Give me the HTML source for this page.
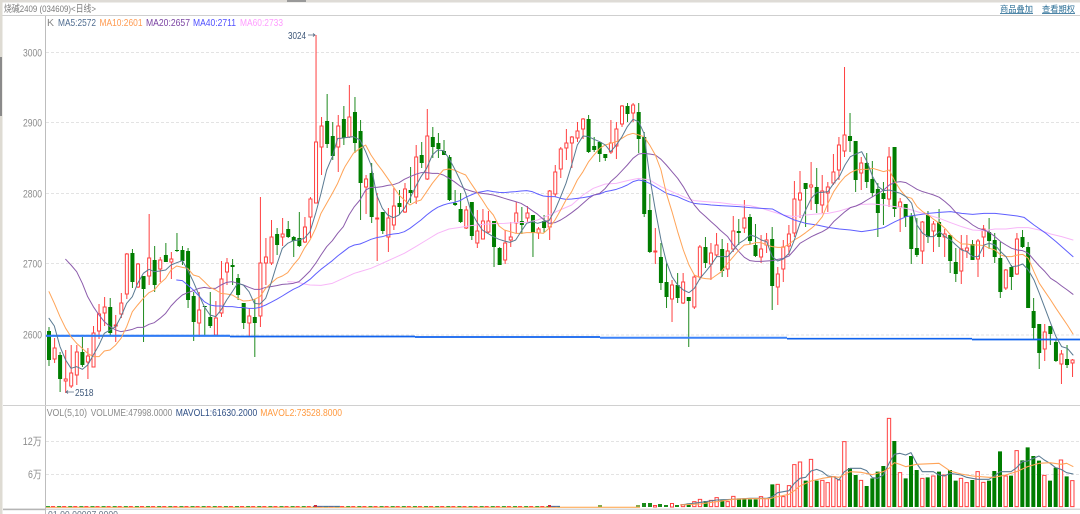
<!DOCTYPE html>
<html>
<head>
<meta charset="utf-8">
<title>烧碱2409</title>
<style>
html,body{margin:0;padding:0;background:#fff;width:1080px;height:514px;overflow:hidden}
svg{display:block;filter:blur(.3px)}
text{font-family:"Liberation Sans","Noto Sans CJK SC",sans-serif}
</style>
</head>
<body>
<svg width="1080" height="514" viewBox="0 0 1080 514" xmlns="http://www.w3.org/2000/svg">
<rect width="1080" height="514" fill="#fff"/>
<!-- chrome -->
<rect x="0" y="0" width="1080" height="2.5" fill="#dedbd6"/>
<rect x="287" y="0" width="19" height="2" fill="#999"/>
<rect x="0" y="15" width="1080" height="1" fill="#cfcfcf"/>
<rect x="0" y="0" width="2.5" height="514" fill="#dedbd3"/>
<rect x="0" y="57" width="2" height="59" fill="#8a8a8a"/>
<rect x="45" y="16" width="1" height="498" fill="#bdbdbd"/>
<rect x="3" y="405" width="1077" height="1" fill="#d0d0d0"/>
<rect x="46" y="508.6" width="1034" height="1.2" fill="#cfcfcf"/>
<rect x="3" y="508.6" width="42" height="1.6" fill="#b5b5b5"/>
<!-- grid -->
<g stroke="#e3e3e3" stroke-width="1" stroke-dasharray="3 2">
<path d="M46 52.5H1080M46 122.5H1080M46 193.5H1080M46 263.5H1080M46 335H1080M46 441.5H1080M46 474.5H1080"/>
</g>
<!-- title & links -->
<text x="4" y="12" font-size="9.5" fill="#7a7a7a" textLength="92" lengthAdjust="spacingAndGlyphs">烧碱2409 (034609)&lt;日线&gt;</text>
<text x="1000" y="12" font-size="8.3" fill="#2a6e96" text-decoration="underline" textLength="33" lengthAdjust="spacingAndGlyphs">商品叠加</text>
<text x="1042" y="12" font-size="8.3" fill="#2a6e96" text-decoration="underline" textLength="33" lengthAdjust="spacingAndGlyphs">查看期权</text>
<!-- axis labels -->
<g font-size="11" fill="#8c8c8c">
<text x="23" y="56.5" textLength="19" lengthAdjust="spacingAndGlyphs">3000</text>
<text x="23" y="126.5" textLength="19" lengthAdjust="spacingAndGlyphs">2900</text>
<text x="23" y="197.5" textLength="19" lengthAdjust="spacingAndGlyphs">2800</text>
<text x="23" y="267.5" textLength="19" lengthAdjust="spacingAndGlyphs">2700</text>
<text x="23" y="338.5" textLength="19" lengthAdjust="spacingAndGlyphs">2600</text>
<text x="22.7" y="445" textLength="19" lengthAdjust="spacingAndGlyphs">12万</text>
<text x="28" y="478" textLength="13.7" lengthAdjust="spacingAndGlyphs">6万</text>
</g>
<!-- legend -->
<g font-size="10.5">
<text x="47" y="26" fill="#888">K</text>
<text x="58" y="26" fill="#4f6c90" textLength="38" lengthAdjust="spacingAndGlyphs">MA5:2572</text>
<text x="99.5" y="26" fill="#ff9a50" textLength="43" lengthAdjust="spacingAndGlyphs">MA10:2601</text>
<text x="146" y="26" fill="#7a42a2" textLength="44" lengthAdjust="spacingAndGlyphs">MA20:2657</text>
<text x="193" y="26" fill="#5050ff" textLength="43" lengthAdjust="spacingAndGlyphs">MA40:2711</text>
<text x="240" y="26" fill="#ff9cff" textLength="43" lengthAdjust="spacingAndGlyphs">MA60:2733</text>
<text x="46.7" y="416" fill="#8a8a8a" textLength="40.3" lengthAdjust="spacingAndGlyphs">VOL(5,10)</text>
<text x="90.7" y="416" fill="#8a8a8a" textLength="81.6" lengthAdjust="spacingAndGlyphs">VOLUME:47998.0000</text>
<text x="175.7" y="416" fill="#2f4f85" textLength="81.6" lengthAdjust="spacingAndGlyphs">MAVOL1:61630.2000</text>
<text x="260.3" y="416" fill="#ff9a40" textLength="81.7" lengthAdjust="spacingAndGlyphs">MAVOL2:73528.8000</text>
<text x="48" y="518" fill="#667788" textLength="70" lengthAdjust="spacingAndGlyphs">01.00.00007.0000</text>
</g>
<!-- candles -->
<g transform="matrix(1.00054 0 0 1 -.03 0)">
<path fill="none" stroke="#ff4040" stroke-width="1" d="M54.6 338V363M65.7 350V393M71.2 345V388M76.8 345V385M87.9 348V379M93.5 326V367M99 304V339M104.6 297V326M115.7 315V342M121.3 293V318M126.8 253V299M138 263V288M149.1 214V285M160.2 257V282M171.3 252V279M199.1 292V337M215.8 301V336M221.4 261V317M226.9 258V285M249.2 308V336M260.3 197V327M265.8 238V285M271.4 220V265M282.5 218V246M304.8 217V243M310.3 197V238M315.9 35V203M321.4 117V175M338.1 115V172M349.2 85V138M365.9 175V214M377 193V261M388.2 208V252M393.7 188V230M404.8 183V213M416 145V204M427.1 109V180M466 206V229M477.1 210V248M482.7 209V239M488.2 211V233M504.9 230V264M510.5 222V247M516 202V233M527.2 206V222M538.3 227V239M549.4 190V240M555 165V197M560.5 147V178M566.1 129V160M571.6 136V168M577.2 122V142M582.8 118V139M610.6 120V154M616.1 122V159M621.7 105V127M632.8 103V122M655 228V264M671.7 280V322M682.8 273V304M694 275V309M699.5 245V280M710.6 243V280M716.2 233V257M727.3 243V277M732.9 216V252M744 200V233M760.7 235V263M766.2 233V253M777.4 267V305M782.9 240V282M788.5 225V255M794 181V237M799.6 171V218M810.7 162V210M821.8 175V213M827.4 182V212M833 154V185M838.5 137V180M844.1 67V157M860.8 157V190M888.6 147V207M899.7 198V232M921.9 221V264M933 221V252M944.2 229V257M960.8 235V284M966.4 235V258M977.5 239V277M983.1 225V257M1005.3 269V290M1016.4 233V275M1044.2 324V361M1060.9 350V384M1072 359V377"/>
<path fill="none" stroke="#1e8a1e" stroke-width="1" d="M49 327V366M60.1 352V392M82.4 337V367M110.2 298V335M132.4 249V288M143.5 276V342M154.6 246V292M165.8 243V262M176.9 233V252M182.4 246V265M188 248V308M193.6 292V341M204.7 306V335M210.2 292V328M232.5 259V285M238 274V300M243.6 303V329M254.7 299V357M277 228V255M288.1 221V238M293.6 236V257M299.2 212V247M327 94V148M332.6 122V160M343.7 106V145M354.8 97V153M360.4 120V220M371.5 163V223M382.6 212V234M399.3 190V215M410.4 167V203M421.5 142V168M432.6 127V158M438.2 133V158M443.8 140V155M449.3 155V201M454.9 190V206M460.4 193V223M471.6 202V240M493.8 221V267M499.4 247V265M521.6 207V234M532.7 215V257M543.8 215V233M588.3 115V153M593.9 137V152M599.4 142V162M605 154V161M627.2 103V122M638.4 103V153M643.9 132V217M649.5 194V253M660.6 243V290M666.2 263V308M677.3 273V303M688.4 297V347M705.1 237V268M721.8 239V277M738.4 219V245M749.6 214V244M755.1 224V257M771.8 227V310M805.2 183V227M816.3 168V213M849.6 113V152M855.2 141V192M866.3 153V188M871.9 161V197M877.4 183V237M883 182V225M894.1 147V217M905.2 204V227M910.8 213V264M916.4 218V257M927.5 211V243M938.6 209V247M949.7 234V273M955.3 248V282M972 240V260M988.6 218V249M994.2 233V263M999.8 242V298M1010.9 265V290M1022 230V248M1027.6 242V308M1033.1 298V339M1038.7 325V369M1049.8 326V345M1055.4 340V362M1066.5 345V368"/>
<path fill="#fff" stroke="#ff4040" stroke-width="1" d="M53.1 348h3V359h-3zM64.2 379h3V381h-3zM69.7 373h3V386h-3zM75.3 352h3V375h-3zM86.4 356h3V362h-3zM92 333h3V367h-3zM97.5 314h3V331h-3zM103.1 307h3V313h-3zM114.2 325h3V326h-3zM119.8 303h3V314h-3zM125.3 254h3V294h-3zM136.5 264h3V287h-3zM147.6 258h3V276h-3zM158.7 260h3V269h-3zM169.8 259h3V262h-3zM197.6 310h3V323h-3zM214.3 318h3V335h-3zM219.9 279h3V313h-3zM225.4 263h3V272h-3zM247.7 316h3V323h-3zM258.8 263h3V316h-3zM264.3 257h3V263h-3zM269.9 237h3V263h-3zM281 234h3V237h-3zM303.3 227h3V242h-3zM308.8 199h3V217h-3zM314.4 142h3V203h-3zM319.9 126h3V147h-3zM336.6 126h3V147h-3zM347.7 117h3V137h-3zM364.4 179h3V187h-3zM375.5 218h3V219h-3zM386.7 218h3V237h-3zM392.2 206h3V225h-3zM403.3 189h3V212h-3zM414.5 157h3V197h-3zM425.6 136h3V179h-3zM464.5 210h3V228h-3zM475.6 231h3V243h-3zM481.2 221h3V239h-3zM486.7 221h3V232h-3zM503.4 243h3V260h-3zM509 237h3V240h-3zM514.5 213h3V223h-3zM525.7 213h3V218h-3zM536.8 229h3V233h-3zM547.9 191h3V227h-3zM553.5 172h3V194h-3zM559 149h3V169h-3zM564.6 143h3V148h-3zM570.1 137h3V143h-3zM575.7 131h3V138h-3zM581.3 119h3V129h-3zM609.1 143h3V152h-3zM614.6 129h3V146h-3zM620.2 106h3V124h-3zM631.3 105h3V113h-3zM653.5 251h3V252h-3zM670.2 285h3V299h-3zM681.3 282h3V303h-3zM692.5 277h3V307h-3zM698 247h3V277h-3zM709.1 253h3V264h-3zM714.7 245h3V255h-3zM725.8 251h3V269h-3zM731.4 231h3V249h-3zM742.5 218h3V228h-3zM759.2 249h3V257h-3zM764.7 240h3V245h-3zM775.9 274h3V287h-3zM781.4 247h3V269h-3zM787 234h3V246h-3zM792.5 199h3V233h-3zM798.1 193h3V200h-3zM809.2 185h3V187h-3zM820.3 191h3V205h-3zM825.9 187h3V193h-3zM831.5 172h3V183h-3zM837 145h3V170h-3zM842.6 135h3V151h-3zM859.3 163h3V173h-3zM887.1 157h3V199h-3zM898.2 202h3V207h-3zM920.4 222h3V251h-3zM931.5 224h3V231h-3zM942.7 234h3V237h-3zM959.3 249h3V271h-3zM964.9 248h3V251h-3zM976 241h3V259h-3zM981.6 229h3V237h-3zM1003.8 270h3V288h-3zM1014.9 239h3V274h-3zM1042.7 332h3V349h-3zM1059.4 354h3V364h-3zM1070.5 360h3V363h-3z"/>
<path fill="none" stroke="#007d00" stroke-width="4" d="M49 331V360M60.1 355V379M82.4 352V365M110.2 307V333M132.4 253V282M143.5 276V289M154.6 260V285M165.8 255V262M176.9 250V251M182.4 250V261M188 251V300M193.6 296V322M204.7 306V307M210.2 317V326M232.5 265V267M238 278V295M243.6 303V323M254.7 317V323M277 234V245M288.1 229V237M293.6 237V241M299.2 238V246M327 121V144M332.6 136V156M343.7 119V138M354.8 112V143M360.4 131V183M371.5 173V217M382.6 212V231M399.3 203V207M410.4 190V193M421.5 155V163M432.6 137V147M438.2 143V149M443.8 151V155M449.3 157V200M454.9 203V205M460.4 209V222M471.6 202V236M493.8 221V247M499.4 248V265M521.6 221V225M532.7 215V233M543.8 221V228M588.3 119V152M593.9 146V150M599.4 142V154M605 154V158M627.2 106V114M638.4 112V139M643.9 137V214M649.5 210V252M660.6 257V283M666.2 282V297M677.3 285V298M688.4 297V301M705.1 247V263M721.8 249V271M738.4 231V233M749.6 217V241M755.1 245V256M771.8 239V286M805.2 183V189M816.3 187V204M849.6 136V141M855.2 141V180M866.3 163V182M871.9 179V193M877.4 189V213M883 193V199M894.1 147V209M905.2 204V217M910.8 216V249M916.4 248V255M927.5 215V237M938.6 222V237M949.7 235V261M955.3 262V274M972 244V260M988.6 232V241M994.2 240V257M999.8 258V292M1010.9 267V277M1022 237V247M1027.6 247V308M1033.1 311V328M1038.7 324V353M1049.8 326V334M1055.4 342V361M1066.5 359V365"/>
</g>
<!-- support line -->
<g fill="none" stroke-linecap="butt">
<path stroke="#2f7bf5" stroke-width="2.1" d="M46 335.8H230"/>
<path stroke="#0f62ee" stroke-width="1.7" d="M230 336.5H415M415 337H600"/>
<path stroke="#3c82f8" stroke-width="2" d="M600 337.7H787"/>
<path stroke="#0f62ee" stroke-width="1.7" d="M787 338.7H972M972 339.5H1080"/>
</g>
<!-- high/low markers -->
<text x="288" y="39" font-size="10.5" fill="#3c5678" textLength="18" lengthAdjust="spacingAndGlyphs">3024</text>
<path d="M308 35H315M313 33.5L315 35L313 36.5" fill="none" stroke="#5a6d85" stroke-width=".8"/>
<path d="M66 392H74M68 390.5L66 392L68 393.5" fill="none" stroke="#5a6d85" stroke-width=".8"/>
<text x="75" y="396" font-size="10.5" fill="#3c5678" textLength="18.5" lengthAdjust="spacingAndGlyphs">2518</text>
<!-- moving averages: MA60, MA40, MA20, MA10, MA5 -->
<g fill="none" stroke-width="3" stroke-linejoin="round" stroke-linecap="round">
<g transform="matrix(.33333 0 0 .33333 0 170)">
<polyline stroke="#f8b6f8" points="863,335 880,336 897,338 913,342 930,345 963,346 997,340 1030,325 1063,310 1080,305"/>
<polyline stroke="#5f5fff" points="530,330 547,332 563,345 580,360 597,378 613,395 630,405 647,408 663,408 680,410 697,410 713,412 730,413 747,415 763,415 780,412 797,405 813,397 830,388 847,378 863,368 880,358 897,350 913,340 930,328 947,312 963,298 980,285 997,272 1013,258 1030,245 1047,232 1063,225 1080,222"/>
<polyline stroke="#8c5cac" points="197,268 213,285 230,305 247,340 263,380 280,410 297,435 313,455 330,470 347,480 363,485 380,482 397,478 413,472 430,472 447,463 463,458 480,445 497,430 513,408 530,390 547,375 563,368 580,362 597,355 613,352 630,355 647,355 663,345 680,337 697,335 713,340 730,345 747,352 763,358 780,358 797,352 813,350 830,347 847,343 863,342 880,340 897,335 913,320 930,303 947,280 963,255 980,230 997,212 1013,190 1030,170 1047,135 1063,110 1080,90"/>
<polyline stroke="#ffa458" points="147,365 163,400 180,440 197,475 213,500 230,520 247,535 263,550 280,560 297,560 313,543 330,540 347,525 363,505 380,470 397,425 413,405 430,385 447,368 463,360 480,340 497,325 513,300 530,288 547,292 563,295 580,315 597,320 613,335 630,352 647,360 663,370 680,372 697,375 713,385 730,393 747,392 763,388 780,380 797,355 813,340 830,325 847,318 863,308 880,285 897,265 913,235 930,210 947,175 963,130 980,100 997,70 1013,40 1030,0"/>
<polyline stroke="#5a7a92" points="147,445 163,468 180,530 197,570 213,595 230,590 247,598 263,585 280,555 297,525 313,490 330,480 347,470 363,440 380,400 397,380 413,340 430,310 447,298 463,305 480,303 497,300 513,285 530,278 547,272 563,300 580,335 597,375 613,410 630,435 647,440 663,420 680,390 697,365 713,340 730,345 747,365 763,400 780,402 797,385 813,340 830,285 847,235 863,220 880,212 897,210 913,205 930,185 947,130 963,70 980,0"/>
</g>
<g transform="matrix(.33333 0 0 .33333 360 80)">
<polyline stroke="#f8b6f8" points="0,575 33,565 67,550 100,535 133,520 167,500 200,480 233,460 267,447 300,442 333,437 367,433 400,431 433,430 467,428 500,427 533,420 567,405 600,390 635,375 669,345 700,325 736,312 769,310 802,302 836,295 869,300 903,320 936,335 970,350 1003,362 1037,365 1080,368"/>
<polyline stroke="#5f5fff" points="0,492 17,485 33,478 50,473 67,470 83,465 100,462 117,460 133,455 150,445 167,432 183,420 200,405 217,392 233,382 250,375 267,370 283,367 300,362 317,352 333,345 350,338 367,335 383,332 400,335 417,337 433,338 450,336 467,335 483,333 500,332 517,335 533,342 550,348 567,350 585,350 602,355 618,358 635,357 652,355 669,353 686,350 702,345 719,342 736,335 752,332 769,328 786,322 802,315 819,305 836,300 852,303 869,310 886,320 903,330 919,340 936,345 953,350 970,358 987,365 1003,370 1020,372 1037,373 1053,375 1070,376 1080,377"/>
<polyline stroke="#8c5cac" points="0,360 17,330 33,322 50,322 67,320 83,316 100,314 117,308 133,298 150,290 167,283 183,278 200,278 217,280 233,280 250,285 267,295 283,305 300,318 317,328 333,333 350,338 367,340 383,342 400,345 417,350 433,355 450,360 467,365 483,370 500,380 517,392 533,403 550,418 567,430 585,428 602,420 618,410 635,398 652,385 669,370 686,355 702,345 719,340 736,325 752,305 769,290 786,272 802,255 819,235 836,222 852,220 869,222 886,225 903,238 919,255 936,275 953,295 970,320 987,350 1003,375 1020,395 1037,410 1053,425 1070,440 1080,450"/>
<polyline stroke="#ffa458" points="-50,270 -45,260 -20,220 0,205 17,195 33,225 50,250 67,272 83,295 100,320 117,345 133,360 150,375 167,365 183,360 200,335 217,310 233,290 250,270 267,267 283,270 300,278 317,285 333,310 350,335 367,360 383,385 400,405 417,438 433,450 450,455 467,460 483,460 500,458 517,458 533,458 550,460 567,445 585,420 602,390 618,360 635,335 652,300 669,275 686,245 702,225 719,205 736,195 752,190 769,185 786,175 802,165 819,160 836,165 852,170 869,195 886,225 903,270 919,340 936,395 953,455 970,510 987,555 1003,585 1020,593 1037,596 1053,597 1070,585 1080,578"/>
<polyline stroke="#5a7a92" points="-100,270 -83,230 -67,175 -60,175 -20,170 0,180 17,215 33,255 50,345 67,385 83,405 100,413 117,405 133,385 150,355 167,320 183,290 200,265 217,225 233,210 250,212 267,235 283,265 300,300 317,340 333,395 350,425 367,450 383,460 400,470 417,478 433,483 450,487 467,480 483,455 500,430 517,425 533,430 550,425 567,422 585,390 602,350 618,310 635,255 652,195 669,168 686,170 702,178 719,185 736,195 752,215 769,195 786,170 802,140 819,118 836,125 852,160 869,290 886,390 903,480 919,545 936,590 953,615 970,630 987,638 1003,625 1020,595 1037,575 1053,555 1070,530"/>
</g>
<g transform="matrix(.33333 0 0 .33333 720 60)">
<polyline stroke="#f8b6f8" points="0,428 40,433 90,437 124,445 157,455 190,465 223,470 257,465 291,462 324,460 358,453 391,443 425,433 458,432 491,435 525,440 558,445 591,455 625,465 658,475 692,488 725,500 758,510 792,512 825,507 858,507 892,503 925,503 958,510 992,522 1025,530 1059,540"/>
<polyline stroke="#5f5fff" points="0,437 23,438 57,440 90,443 124,445 157,447 190,465 223,480 257,490 291,495 324,502 358,507 391,510 425,515 458,510 491,503 525,485 558,470 591,465 625,460 658,457 692,455 725,460 758,463 792,460 825,460 858,464 892,468 912,472 942,495 975,518 1008,545 1042,575 1059,590"/>
<polyline stroke="#8c5cac" points="0,510 23,530 40,555 57,575 73,592 90,602 107,604 124,604 140,603 157,602 173,598 190,595 207,588 223,570 240,550 257,540 274,530 291,522 307,515 324,505 341,485 358,470 375,455 391,443 408,438 425,430 441,420 458,410 475,400 491,390 508,375 525,367 541,365 558,368 575,378 591,388 608,395 625,400 641,405 658,412 675,425 692,440 708,458 725,472 741,482 758,495 775,505 792,510 808,517 825,530 842,545 858,555 875,565 892,570 908,572 925,580 942,600 958,618 975,635 992,655 1008,665 1025,678 1042,690 1059,703"/>
<polyline stroke="#ffa458" points="0,638 4,635 23,610 40,590 57,570 73,555 90,553 107,548 124,548 140,555 157,560 173,562 190,562 207,552 223,540 240,530 257,518 274,505 291,490 307,470 324,430 341,395 358,370 375,350 391,338 408,330 425,328 441,328 458,325 475,330 491,335 508,330 525,365 541,390 558,410 575,415 591,440 608,455 625,465 641,478 658,490 675,505 692,525 708,540 725,552 741,552 758,555 775,555 792,557 808,565 825,570 842,585 858,590 875,590 892,585 908,583 925,595 942,635 958,670 975,695 992,720 1008,745 1025,770 1042,795 1059,822"/>
<polyline stroke="#5a7a92" points="-10,590 4,590 23,590 40,570 57,550 73,540 90,525 107,530 124,540 140,545 157,590 173,603 190,597 207,580 223,540 240,490 257,450 274,415 291,397 307,397 324,395 341,370 358,350 375,315 391,290 408,282 425,275 441,305 458,350 475,380 491,392 508,390 525,395 541,400 558,410 575,430 591,495 608,520 625,530 641,530 658,515 675,530 692,540 708,555 725,570 741,575 758,590 775,590 792,555 808,550 825,555 842,575 858,590 875,620 892,618 908,612 925,630 942,660 958,700 975,745 992,790 1008,830 1025,860 1042,865 1059,885"/>
</g>
</g>
<!-- volume base -->
<path d="M46 507.3H640" stroke="#ffa040" stroke-width="1" fill="none"/>
<path d="M46 506.6H560" stroke="#ff4a4a" stroke-width="1.1" stroke-dasharray="4 7.12" stroke-dashoffset="-5" fill="none"/>
<path d="M46 506.6H560" stroke="#3aa53a" stroke-width="1.1" stroke-dasharray="4 7.12" fill="none"/>
<path d="M313 506.4H340M550 506.4H560" stroke="#4a6fa0" stroke-width="1" fill="none"/>
<path d="M314 505h3v2h-3zM548 505h3v2h-3z" fill="#cc2a3a"/>
<path d="M598 505h4v2h-4zM636 505h4v2h-4z" fill="#8aa84a"/>
<path d="M642 503h4v4h-4zM648 503h4v4h-4zM658 504h4v3h-4zM664 505h4v2h-4zM675 505h4v2h-4z" fill="#1a8a1a"/>
<path d="M653.5 505.5h3v1.5h-3zM670.5 503.5h3v3.5h-3z" fill="#fff" stroke="#ff4040" stroke-width="1"/>
<!-- volume bars -->
<g transform="matrix(.33333 0 0 .33333 680 400)">
<path fill="#fff" stroke="#ff4040" stroke-width="3" d="M4 314h10V320h-10zM38 305h10V320h-10zM55 298h10V320h-10zM88 301h10V320h-10zM105 293h10V320h-10zM138 305h10V320h-10zM155 289h10V320h-10zM238 290h10V320h-10zM255 296h10V320h-10zM288 253h10V320h-10zM305 290h10V320h-10zM322 257h10V320h-10zM338 194h10V320h-10zM355 186h10V320h-10zM388 178h10V320h-10zM422 241h10V320h-10zM438 248h10V320h-10zM455 230h10V320h-10zM472 240h10V320h-10zM488 125h10V320h-10zM538 241h10V320h-10zM622 55h10V320h-10zM655 218h10V320h-10zM722 235h10V320h-10zM755 228h10V320h-10zM788 225h10V320h-10zM838 235h10V320h-10zM855 248h10V320h-10zM888 215h10V320h-10zM905 247h10V320h-10zM972 228h10V320h-10zM1005 152h10V320h-10zM1088 226h10V320h-10zM1138 180h10V320h-10zM1172 242h10V320h-10z"/>
<path fill="#007d00" d="M20 310h12V321h-12zM71 303h12V321h-12zM121 298h12V321h-12zM171 295h12V321h-12zM187 295h12V321h-12zM204 298h12V321h-12zM221 298h12V321h-12zM271 253h12V321h-12zM371 242h12V321h-12zM404 242h12V321h-12zM504 204h12V321h-12zM521 225h12V321h-12zM554 258h12V321h-12zM571 235h12V321h-12zM587 215h12V321h-12zM604 198h12V321h-12zM637 123h12V321h-12zM671 235h12V321h-12zM687 168h12V321h-12zM704 210h12V321h-12zM737 232h12V321h-12zM771 215h12V321h-12zM804 210h12V321h-12zM821 242h12V321h-12zM871 240h12V321h-12zM921 242h12V321h-12zM937 213h12V321h-12zM954 154h12V321h-12zM987 227h12V321h-12zM1021 181h12V321h-12zM1037 142h12V321h-12zM1054 168h12V321h-12zM1071 182h12V321h-12zM1104 242h12V321h-12zM1121 203h12V321h-12zM1154 229h12V321h-12z"/>
<g fill="none" stroke-width="3.2" stroke-linejoin="round">
<polyline stroke="#5a7a92" points="0,315 40,310 77,305 110,300 160,298 210,295 260,295 277,290 293,278 327,272 343,250 360,235 377,232 393,213 410,208 427,215 443,228 460,230 477,240 493,215 510,205 543,205 560,212 577,233 593,235 610,225 627,190 643,163 660,160 677,165 693,158 710,190 727,215 760,215 777,225 793,228 810,220 843,225 860,232 893,238 927,238 943,228 960,215 993,215 1010,203 1027,185 1043,183 1060,175 1077,168 1093,180 1110,190 1127,203 1143,208 1160,218 1180,222"/>
<polyline stroke="#ffa458" points="0,315 60,312 110,305 160,298 210,296 270,296 293,290 327,283 343,272 360,258 393,243 427,235 460,230 477,232 510,215 543,217 577,224 610,215 627,205 643,188 660,193 677,200 710,193 777,190 810,213 843,222 877,228 927,232 943,232 977,225 1010,215 1043,200 1077,190 1110,188 1143,193 1160,190 1180,200"/>
</g>
</g>
</svg>
</body>
</html>
